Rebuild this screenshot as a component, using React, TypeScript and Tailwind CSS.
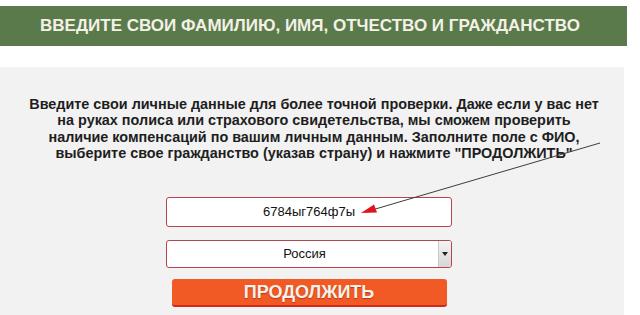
import React from "react";

export default function App() {
  return (
    <div
      className="relative w-[640px] h-[315px] overflow-hidden bg-white"
      style={{ fontFamily: '"Liberation Sans", Arial, sans-serif' }}
    >
      <div className="mt-[6px] w-[627px] h-[40px] bg-[#5b7a4b] flex items-center justify-center">
        <span className="text-[17px] font-bold text-[#f3f1e6] pr-[7px]">
          ВВЕДИТЕ СВОИ ФАМИЛИЮ, ИМЯ, ОТЧЕСТВО И ГРАЖДАНСТВО
        </span>
      </div>

      <div className="mt-[21px] w-[624px] h-[260px] bg-[#f2f2f2] pt-[29px] pr-[6px] flex flex-col items-center">
        <p className="text-center font-bold text-[14.4px] leading-[16.3px] text-[#1e1e1e] pl-[10px]">
          Введите свои личные данные для более точной проверки. Даже если у вас нет
          <br />
          на руках полиса или страхового свидетельства, мы сможем проверить
          <br />
          наличие компенсаций по вашим личным данным. Заполните поле с ФИО,
          <br />
          выберите свое гражданство (указав страну) и нажмите "ПРОДОЛЖИТЬ"
        </p>

        <div className="mt-[36px] w-[286px] h-[30px] border border-[#b8424e] rounded-[3px] bg-white flex items-center justify-center text-[13px] text-[#111]">
          6784ыг764ф7ы
        </div>

        <div className="mt-[13px] w-[286px] h-[28px] border border-[#b8424e] rounded-[3px] bg-white flex items-stretch">
          <div className="flex-1 flex items-center justify-center text-[13px] text-[#111] pl-[4px]">
            Россия
          </div>
          <div className="w-[13px] border-l border-[#c8c8c8] bg-gradient-to-b from-[#f4f4f4] to-[#d6d6d6] flex items-center justify-center rounded-r-[2px]">
            <svg width="6" height="4" viewBox="0 0 6 4">
              <polygon points="0,0 6,0 3,4" fill="#222" />
            </svg>
          </div>
        </div>

        <div className="mt-[11px] w-[275px] h-[28px] bg-[#f15a25] border-b-[2px] border-[#cf2a1c] rounded-[3px] flex items-center justify-center">
          <span
            className="text-[18px] font-bold text-[#f8f1ea] leading-none"
            style={{ textShadow: "0 1px 1px rgba(120,30,10,0.5)" }}
          >
            ПРОДОЛЖИТЬ
          </span>
        </div>
      </div>

      <svg
        className="absolute left-0 top-0 pointer-events-none"
        width="640"
        height="315"
        viewBox="0 0 640 315"
      >
        <line x1="600" y1="143" x2="372" y2="210" stroke="#3c3c3c" strokeWidth="1" />
        <polygon points="361,213 377,212.5 374,204.5" fill="#e0141e" />
      </svg>
    </div>
  );
}
